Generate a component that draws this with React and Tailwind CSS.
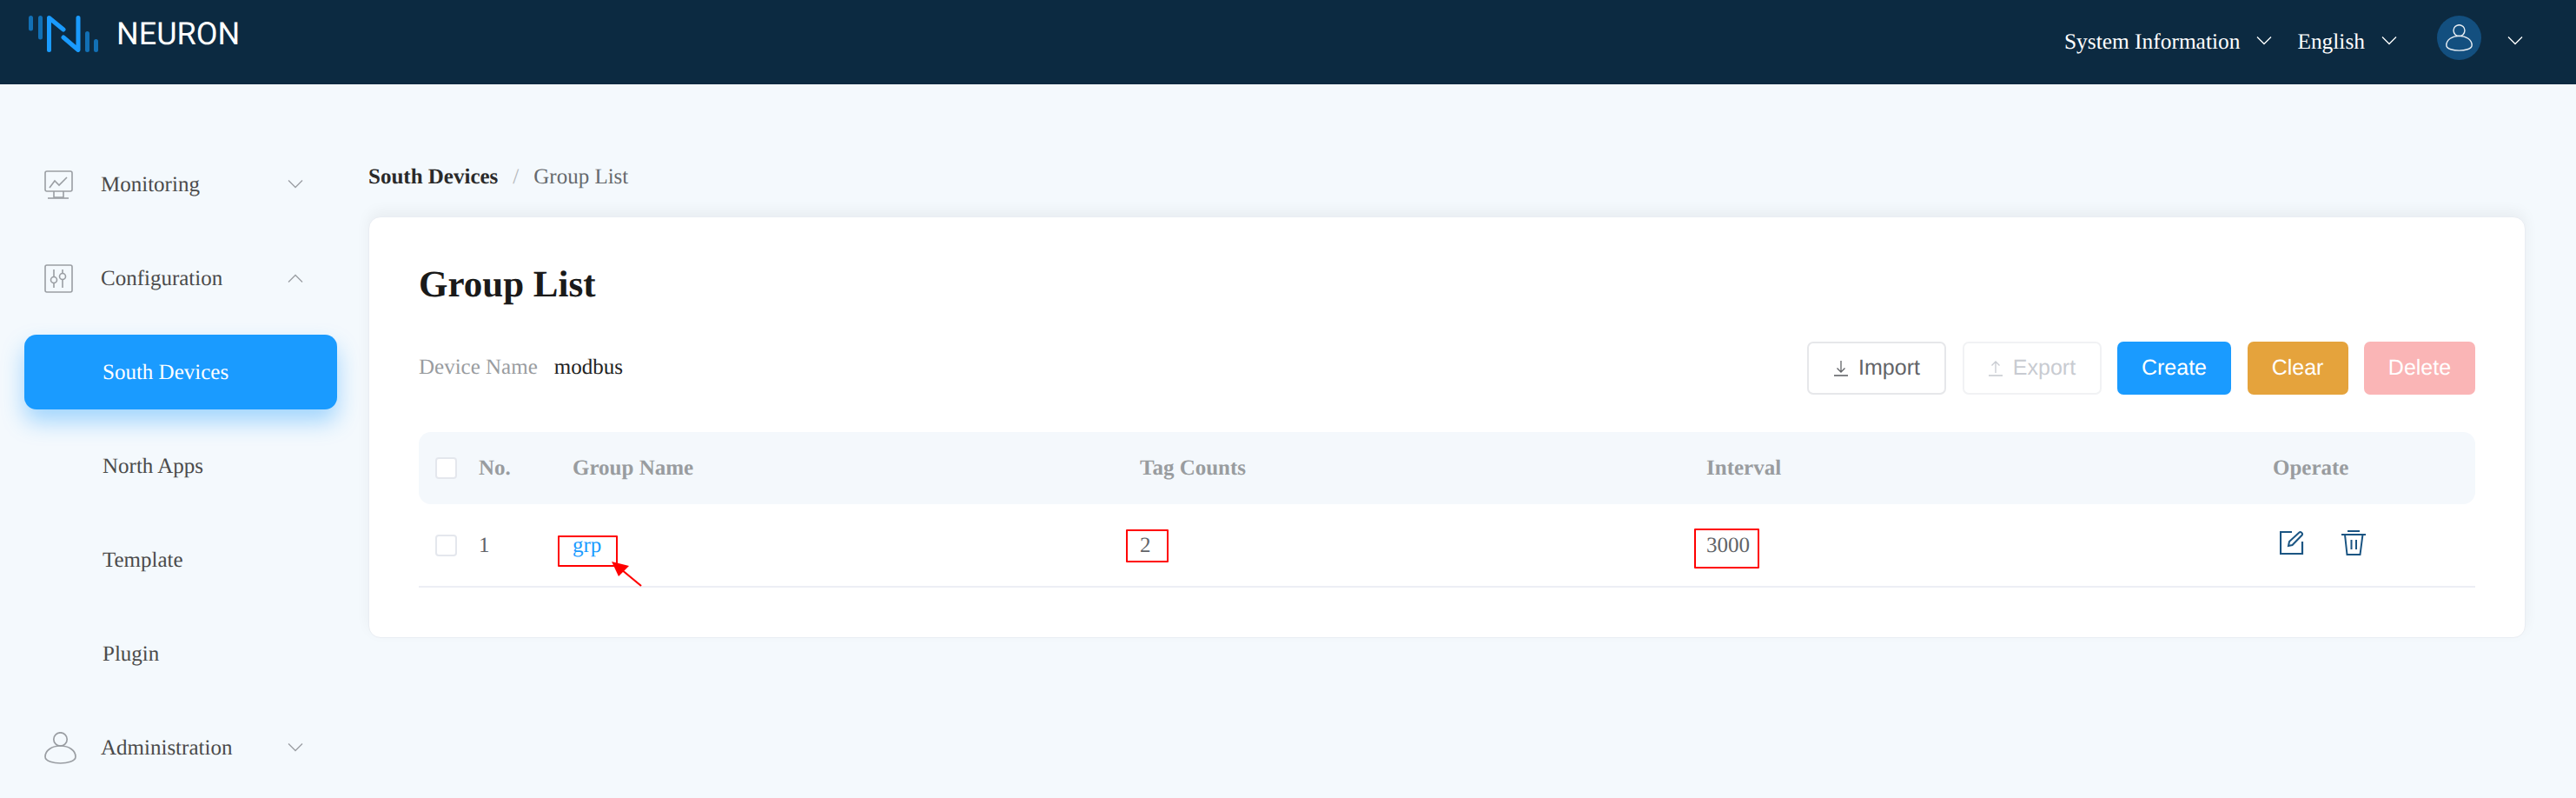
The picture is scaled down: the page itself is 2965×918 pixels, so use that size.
import React from "react";

const Chevron = ({ up = false, className = "" }) => (
  <svg width="18" height="10" viewBox="0 0 18 10" fill="none" className={className}>
    <path d={up ? "M1 9.5L9 1.5L17 9.5" : "M1 .5L9 8.5L17 .5"} stroke="currentColor" strokeWidth="1.3" />
  </svg>
);

const Person = ({ className = "", color = "#9a9ea3", w = 37, h = 37 }) => (
  <svg width={w} height={h} viewBox="0 0 37 37" fill="none" className={className} stroke={color} strokeWidth="1.7">
    <circle cx="18.5" cy="8.5" r="7.7" />
    <path d="M1 28.5C1 21 9 16 18.5 16C28 16 36 21 36 28.5C36 34 26 36 18.5 36C11 36 1 34 1 28.5Z" />
  </svg>
);

const MonitorIcon = () => (
  <svg width="33" height="33" viewBox="0 0 33 33" fill="none" stroke="#9a9ea3" strokeWidth="1.6">
    <rect x="1" y="1" width="31" height="23" rx="2" />
    <path d="M6 20L12 12L17 17L26 8" />
    <path d="M11 24V31H22V24" />
    <path d="M4 32H28" />
  </svg>
);

const SlidersIcon = () => (
  <svg width="33" height="33" viewBox="0 0 33 33" fill="none" stroke="#9a9ea3" strokeWidth="1.6">
    <rect x="1" y="1" width="31" height="31" rx="2" />
    <path d="M11 6V14.5M11 21.5V27M21 6V10.5M21 17.5V27" />
    <circle cx="11" cy="18" r="3.5" />
    <circle cx="21" cy="14" r="3.5" />
  </svg>
);

const Logo = () => (
  <svg width="80" height="42" viewBox="0 0 80 42" fill="none" strokeLinecap="round" strokeWidth="5">
    <path d="M2.5 2.5V15" stroke="#1270b5" />
    <path d="M13.5 2.5V25" stroke="#1270b5" />
    <path d="M23.5 39.5V2.5L40 16M40 25L57 39.5V2.5" stroke="#1a9bff" strokeLinejoin="round" />
    <path d="M67.5 20.5V39.5" stroke="#1270b5" />
    <path d="M77.5 29.5V39.5" stroke="#1270b5" />
  </svg>
);

const EditIcon = () => (
  <svg width="28" height="28" viewBox="0 0 28 28" fill="none" stroke="#1b5583" strokeWidth="2.2">
    <path d="M14 2H1V27H26V13" />
    <path d="M10 18L11 13L22.5 2.5C24 1.2 27 3.5 25.7 5.5L14.5 17Z" strokeWidth="2" />
  </svg>
);

const TrashIcon = () => (
  <svg width="28" height="29" viewBox="0 0 28 29" fill="none" stroke="#1b5583" strokeWidth="2">
    <path d="M7 1H21" />
    <path d="M0 5H28" />
    <path d="M4 5L6.5 28H21.5L24.5 5" />
    <path d="M11.5 11V22M17 11V22" />
  </svg>
);

const DownloadIcon = ({ up = false }) => (
  <svg width="18" height="18" viewBox="0 0 18 18" fill="none" stroke="currentColor" strokeWidth="1.3">
    <path d={up ? "M9 14V1M4.5 5.5L9 1L13.5 5.5" : "M9 0V13M4.5 8.5L9 13L13.5 8.5"} />
    <path d="M1 17H17" strokeWidth="1.6" />
  </svg>
);

const Box = ({ className }) => <span className={`absolute border-[2px] border-[#ff0000] rounded-[1px] ${className}`} />;

const SideItem = ({ icon, label, chevron, up }) => (
  <div className="h-[86px] flex items-center pl-[23px] pr-[39px] text-[#4b4b4b]">
    <span className="w-[65px] flex-none">{icon}</span>
    <span className="flex-1 pt-[2px]">{label}</span>
    {chevron && <Chevron up={up} className="text-[#9a9ea3]" />}
  </div>
);

const SubItem = ({ label, active }) => (
  <div
    className={
      active
        ? "h-[86px] flex items-center pl-[90px] pt-[2px] rounded-[14px] bg-[#1a9bff] text-white shadow-[0_14px_26px_rgba(26,155,255,0.38)]"
        : "h-[86px] flex items-center pl-[90px] pt-[2px] text-[#4b4b4b]"
    }
  >
    {label}
  </div>
);

const Checkbox = () => <span className="block w-[25px] h-[25px] rounded-[4px] border-2 border-[#e4e7ed] bg-white" />;

const Btn = ({ className, children }) => (
  <div className={`h-[61px] rounded-[7px] flex items-center justify-center gap-[11px] font-['Liberation_Sans',sans-serif] ${className}`}>
    {children}
  </div>
);

const cols = "grid grid-cols-[69px_108px_653px_652px_652px_233px] items-center";

export default function App() {
  return (
    <div className="w-[2965px] h-[918px] overflow-hidden bg-[#f4f9fd] font-['Liberation_Serif',serif] text-[25px] [text-rendering:geometricPrecision]">
      <header className="h-[97px] bg-[#0c2a41] flex items-start justify-between pl-[33px] pr-[61px]">
        <div className="flex items-start pt-[18px]">
          <Logo />
          <span className="ml-[21px] mt-[-2px] font-['Roboto',sans-serif] text-[36px] leading-[46px] text-white">NEURON</span>
        </div>
        <div className="flex items-center h-[97px] pb-[3px] text-[25.4px] text-white">
          <span className="pt-[2px]">System Information</span>
          <Chevron className="ml-[19px]" />
          <span className="ml-[29px] pt-[2px]">English</span>
          <Chevron className="ml-[19px]" />
          <span className="ml-[46px] mb-[7px] w-[51px] h-[51px] rounded-full bg-[#134f7f] flex items-center justify-center">
            <Person w={31} h={31} color="#e8eef3" />
          </span>
          <Chevron className="ml-[30px]" />
        </div>
      </header>

      <div className="flex">
        <aside className="w-[360px] ml-[28px] pt-[72px] flex flex-col gap-[22px] flex-none">
          <SideItem icon={<MonitorIcon />} label="Monitoring" chevron />
          <SideItem icon={<SlidersIcon />} label="Configuration" chevron up />
          <SubItem label="South Devices" active />
          <SubItem label="North Apps" />
          <SubItem label="Template" />
          <SubItem label="Plugin" />
          <SideItem icon={<Person />} label="Administration" chevron />
        </aside>

        <main className="w-[2483px] ml-[36px] flex-none pt-[91px]">
          <div className="h-[30px] flex items-center pt-[2px]">
            <span className="font-bold text-[#2a2a2a]">South Devices</span>
            <span className="mx-[17px] text-[#b5b8bb]">/</span>
            <span className="text-[#666a6e]">Group List</span>
          </div>

          <section className="mt-[31px] h-[485px] rounded-[14px] bg-white border border-[#e9edf3] px-[57px] pt-[49px] shadow-[0_-6px_16px_rgba(0,0,0,0.05)]">
            <h1 className="h-[58px] flex items-center font-bold text-[43px] text-[#1a1a1a]">Group List</h1>

            <div className="mt-[36px] h-[61px] flex items-center justify-between">
              <div className="flex items-center mb-[2px]">
                <span className="text-[#999c9f]">Device Name</span>
                <span className="ml-[19px] text-[#222]">modbus</span>
              </div>
              <div className="flex items-center gap-[18.5px]">
                <Btn className="w-[160px] border-2 border-[#e6e7ea] bg-white text-[#626468]">
                  <DownloadIcon />
                  Import
                </Btn>
                <Btn className="w-[160px] border-2 border-[#f1f2f4] bg-white text-[#c8cbd1]">
                  <DownloadIcon up />
                  Export
                </Btn>
                <Btn className="w-[131px] bg-[#1a9bff] text-white">Create</Btn>
                <Btn className="w-[116px] bg-[#e5a33c] text-white">Clear</Btn>
                <Btn className="w-[128px] bg-[#fab5b6] text-white">Delete</Btn>
              </div>
            </div>

            <div className="mt-[43px]">
              <div className={`${cols} h-[83px] rounded-[14px] bg-[#f4f8fc] font-bold text-[#999c9f]`}>
                <span className="pl-[19px]"><Checkbox /></span>
                <span>No.</span>
                <span>Group Name</span>
                <span>Tag Counts</span>
                <span>Interval</span>
                <span>Operate</span>
              </div>
              <div className={`${cols} h-[96px] border-b-2 border-[#eceef5] text-[#626468]`}>
                <span className="pl-[19px]"><Checkbox /></span>
                <span className="pt-[2px]">1</span>
                <span className="relative pt-[2px] text-[#1a9bff] leading-[30px]">
                  grp
                  <Box className="left-[-17px] top-[5px] w-[69px] h-[36px]" />
                  <svg width="40" height="32" viewBox="0 0 40 32" className="absolute left-[44px] top-[34px]">
                    <path d="M35 29L12 10" stroke="#ff0000" strokeWidth="2.2" />
                    <path d="M1 1L21 6L9 18Z" fill="#ff0000" />
                  </svg>
                </span>
                <span className="relative pt-[2px] leading-[30px]">
                  2
                  <Box className="left-[-16px] top-[-2px] w-[49px] h-[38px]" />
                </span>
                <span className="relative pt-[2px] leading-[30px]">
                  3000
                  <Box className="left-[-14px] top-[-3px] w-[75px] h-[46px]" />
                </span>
                <span className="flex items-center gap-[43px] pl-[8px] pb-[6px]">
                  <EditIcon />
                  <TrashIcon />
                </span>
              </div>
            </div>
          </section>
        </main>
      </div>
    </div>
  );
}
